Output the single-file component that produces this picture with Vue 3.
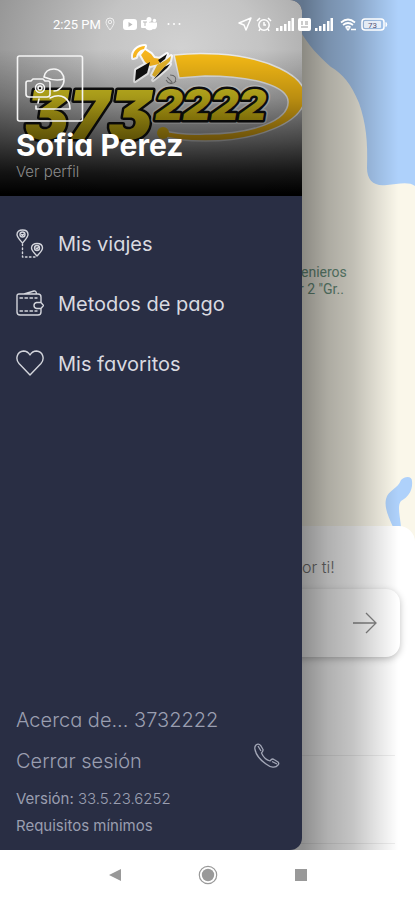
<script setup>
const trips = [
  { id: 'trips', label: 'Mis viajes' },
  { id: 'wallet', label: 'Metodos de pago' },
  { id: 'heart', label: 'Mis favoritos' },
]
</script>

<template>
  <div class="phone">
    <main class="stage">
      <div class="backdrop">
        <svg class="map" viewBox="0 0 415 850" preserveAspectRatio="xMaxYMin slice" aria-hidden="true">
          <rect width="415" height="850" fill="#faf7ea" />
          <path fill="#aed1fb" d="M280 0H415V186C409 181 397 184 387 185C374 187 367 180 367 168C368 142 366 123 359 103C351 84 343 74 331 67C318 56 308 44 302 34L280 0Z" />
          <path fill="#aed1fb" d="M401 480C405 476 412 476 412 481C413 491 408 497 401 501C397 506 400 516 401 527H393C389 518 384 508 386 499C388 490 398 489 401 480Z" />
          <g class="place">
            <text x="301" y="277">enieros</text>
            <text x="299" y="294">r 2 "Gr..</text>
          </g>
        </svg>
        <section class="sheet">
          <p class="slogan">or ti!</p>
          <button class="go" type="button" aria-label="Continuar">
            <svg width="26" height="24" viewBox="0 0 26 24"><path d="M1 12H24M14 2L24 12L14 22" fill="none" stroke="#888" stroke-width="1.3" /></svg>
          </button>
          <div class="line"></div>
          <div class="line second"></div>
        </section>
        <div class="shade"></div>
      </div>

      <aside class="drawer">
        <header class="profile">
          <svg class="brand" viewBox="0 0 302 196" preserveAspectRatio="xMinYMin slice" aria-hidden="true">
            <defs>
              <linearGradient id="gold" x1="0" y1="0" x2="0" y2="1">
                <stop offset="0.25" stop-color="#dccb22" />
                <stop offset="0.8" stop-color="#d9bd10" />
              </linearGradient>
              <g id="craft">
                <path fill="#fbb920" d="M133 58C132 51 138 46 145 46L144 49C139 50 137 53 136 57ZM141 55L145 50L151 54L154 58L161 59L159 64L150 66L145 62Z" />
                <path fill="#111" d="M136 70L150 62L147 73L135 81ZM158 60L167 54L165 59L160 63ZM153 80L164 67L170 64L167 68L158 76Z" />
                <path fill="#edba2b" d="M152 75L157 65L166 60L171 56L170 61L155 77Z" />
              </g>
            </defs>
            <path d="M174 55C190 53 203 53 218 54C266 57 305 75 305 96C305 123 256 141 205 141C186 141 171 139 162 136V130C176 134 189 135 205 134C252 134 288 121 288 102C288 86 253 76 205 76L179 78Z" fill="#f9bd16" stroke="#eee" stroke-width="1.500" />
            <circle cx="163" cy="133" r="6" fill="#e9bd16" />
            <g class="digits">
              <text x="24" y="139" class="big">373</text>
              <text x="155" y="120" class="small halo">2222</text>
              <text x="155" y="120" class="small">2222</text>
            </g>
            <use href="#craft" stroke="#fff" stroke-width="4" stroke-linejoin="round" />
            <use href="#craft" />
            <path d="M167 77L172 82M170 75C175 75 177 78 175 82M168 83H173M166 80C168 84 173 85 176 81" fill="none" stroke="#777" stroke-width="1" />
          </svg>
          <div class="dim"></div>
          <div class="identity">
            <button class="avatar" type="button" aria-label="Cambiar foto">
              <svg width="68" height="68" viewBox="0 0 68 68" fill="none" stroke="#f4f4f4" stroke-width="1.6" stroke-linejoin="round" stroke-linecap="round">
                <rect x="1.500" y="1" width="65" height="65" rx="2" />
                <path d="M28 22C29 16 33 14 38 14C44 14 48 19 48 25C48 31 43 36 38 36M28 22C35 25 42 26 48 24M34 43C46 37 54 44 54 54H20V51M23 44L22 48" />
                <path d="M12 26H15L17 24H27L29 26H32Q34 26 34 28V39Q34 42 31 42H13Q10 42 10 39V28Q10 26 12 26Z" />
                <circle cx="24" cy="33" r="4.500" /><circle cx="24" cy="33" r="2" />
              </svg>
            </button>
            <h1>Sofia Perez</h1>
            <a class="view" href="#perfil">Ver perfil</a>
          </div>
        </header>

        <nav class="menu">
          <a v-for="item in trips" :key="item.id" :href="'#' + item.id">
            <svg width="28" height="30" viewBox="0 0 28 30" fill="none" stroke="#d3d5dc" stroke-width="1.4" stroke-linecap="round" stroke-linejoin="round">
              <template v-if="item.id === 'trips'">
                <path d="M6.500 14C3 10 1 8 1 5.500C1 2.500 3.500 1 6.500 1S12 2.500 12 5.500C12 8 10 10 6.500 14Z" />
                <circle cx="6.500" cy="5.500" r="2.500" /><path d="M5.500 5.500L6.500 6.500L8 5" />
                <path d="M21 27C17 23 15.500 21.500 15.500 19C15.500 16 18 14.500 21 14.500S26.500 16 26.500 19C26.500 21.500 25 23 21 27Z" />
                <circle cx="21" cy="19" r="2.500" /><path d="M20 19L21 20L22.500 18" />
                <path d="M6.500 15V28H20" stroke-dasharray="1.500 2.500" />
              </template>
              <template v-else-if="item.id === 'wallet'">
                <path d="M8 5L18 2Q20 1.500 20.500 4.500M25 13V8Q25 5 22 5H3Q1 5 1 7V23Q1 26 4 26H22Q25 26 25 23V20M20.500 13.500H25L27.500 16.500L25 19.500H20.500Q18 19 18 16.500Q18 14 20.500 13.500Z" />
                <path d="M4 9H21M4 22H21" stroke-dasharray="2.500 2.500" />
              </template>
              <path v-else d="M14 26L3 14.500C-1 10 1 2.500 7.500 2C10.500 2 12.500 3.500 14 6C15.500 3.500 17.500 2 20.500 2C27 2.500 29 10 25 14.500Z" />
            </svg>
            <span>{{ item.label }}</span>
          </a>
        </nav>

        <footer class="foot">
          <a class="wide" href="#acerca">Acerca de... 3732222</a>
          <div class="session">
            <button class="wide" type="button">Cerrar sesión</button>
            <button class="call" type="button" aria-label="Llamar">
              <svg width="26" height="26" viewBox="0 0 26 26" fill="none" stroke="#a3a7b7" stroke-width="1.3" stroke-linejoin="round">
                <path d="M2 2C4 .5 5.500 1 7 3L9 6.500C9.500 8 8.500 9 7.500 10C9 13.500 12.500 17 16 18C17 16.500 18.500 15.500 20 16.500L24 19C25 20 25 21 24 22C21.500 25.500 16.500 24.500 12 21C7 17.500 2 11.500 1 6.500C.5 4.500 1 3 2 2Z" />
                <path d="M4 3L7 8M18 18.500L23 21" />
              </svg>
            </button>
          </div>
          <p><b>Versión:</b> 33.5.23.6252</p>
          <a class="req" href="#requisitos">Requisitos mínimos</a>
        </footer>
      </aside>

      <div class="status">
        <div class="left">
          <span>2:25 PM</span>
          <svg width="10" height="14" viewBox="0 0 10 14" fill="none" stroke="#eee" stroke-width="1"><path d="M5 13C2 9 1 7 1 5Q1 1 5 1T9 5C9 7 8 9 5 13Z" /><circle cx="5" cy="5" r="1.700" /></svg>
          <svg class="tube" width="14" height="11" viewBox="0 0 14 11"><rect width="14" height="11" rx="3" fill="#fff" /><path d="M5.500 3L9.500 5.500L5.500 8Z" fill="#bbb" /></svg>
          <svg width="16" height="14" viewBox="0 0 16 14" fill="#fff"><circle cx="8" cy="2.500" r="2.500" /><circle cx="13.500" cy="3.500" r="1.700" /><path d="M4 5.500H16V9Q15 13 12 12Q10 14 7 13Q4 12 4 9Z" /><rect y="3" width="8" height="8" rx="1" /><path d="M2 5H6M4 5V9" stroke="#bbb" stroke-width="1" /></svg>
          <svg class="dots" width="14" height="4" viewBox="0 0 14 4" fill="#fff"><circle cx="1.500" cy="2" r="1" /><circle cx="7" cy="2" r="1" /><circle cx="12.500" cy="2" r="1" /></svg>
        </div>
        <div class="right">
          <svg width="14" height="14" viewBox="0 0 14 14" fill="none" stroke="#fff" stroke-width="1.500" stroke-linejoin="round"><path d="M1 6L13 1L8 13L6 8Z" /></svg>
          <svg width="16" height="15" viewBox="0 0 16 15" fill="none" stroke="#fff" stroke-width="1.500"><circle cx="8" cy="8" r="5.200" /><path d="M1 4L4 1M12 1L15 4M8 5V8H10M4 12L3 14M12 12L13 14" /></svg>
          <svg width="18" height="13" viewBox="0 0 18 13" fill="#fff"><path d="M0 10H2.500V13H0ZM4 8H6.500V13H4ZM8 6H10.500V13H8ZM12 3H14.500V13H12ZM15.500 0H18V13H15.500Z" /></svg>
          <svg width="13" height="13" viewBox="0 0 13 13"><rect width="13" height="13" rx="2" fill="#fff" /><path d="M3 4H5M7 4H10M3 6H5M7 6H10M3 9H10" stroke="#999" stroke-width="1" /></svg>
          <svg width="18" height="13" viewBox="0 0 18 13" fill="#fff"><path d="M0 10H2.500V13H0ZM4 8H6.500V13H4ZM8 6H10.500V13H8ZM12 3H14.500V13H12ZM15.500 0H18V13H15.500Z" /></svg>
          <svg class="wifi" width="17" height="13" viewBox="0 0 17 13" fill="none" stroke="#fff" stroke-width="1.700"><path d="M1 4.500Q8 -1.500 15 4.500M3 7Q8 3 13 7M5.500 9.500Q8 7.500 10.500 9.500" /><path d="M8 12L7 11H9ZM11 11.500H16" stroke-width="1.300" /></svg>
          <svg width="27" height="13" viewBox="0 0 27 13"><rect x="1" y="1" width="22" height="11" rx="3" fill="none" stroke="#fff" stroke-width="1.500" /><rect x="3" y="3" width="17" height="7" rx="1" fill="#fff" fill-opacity=".75" /><path d="M25 4.500Q26.500 6.500 25 8.500Z" fill="#fff" stroke="#fff" /><text x="7" y="9.500" class="level">73</text></svg>
        </div>
      </div>
    </main>

    <nav class="keys">
      <button type="button" aria-label="Atrás"><svg width="14" height="14" viewBox="0 0 14 14"><path d="M1 7L13 1V13Z" fill="#999" /></svg></button>
      <button type="button" aria-label="Inicio"><svg width="20" height="20" viewBox="0 0 20 20"><circle cx="10" cy="10" r="8.700" fill="none" stroke="#999" stroke-width="1.200" /><circle cx="10" cy="10" r="6.200" fill="#999" /></svg></button>
      <button type="button" aria-label="Recientes"><svg width="14" height="14" viewBox="0 0 14 14"><rect x="1" y="1" width="12" height="12" fill="#999" /></svg></button>
    </nav>
  </div>
</template>

<style>
body {
  margin: 0;
  background: #fff;
}
</style>

<style scoped>
.phone {
  --drawer: 72.8%;
  display: flex;
  flex-direction: column;
  min-height: 100vh;
  font-family: Inter, "Liberation Sans", sans-serif;
  font-feature-settings: "cv11";
}
button {
  padding: 0;
  border: 0;
  background: none;
  font: inherit;
  font-feature-settings: inherit;
  color: inherit;
}
a {
  color: inherit;
  text-decoration: none;
}
p, h1 {
  margin: 0;
}
svg {
  display: block;
  flex: none;
}
.stage {
  position: relative;
  display: flex;
  flex: 1;
}
.backdrop {
  position: absolute;
  inset: 0;
  display: flex;
  flex-direction: column;
  justify-content: flex-end;
  overflow: hidden;
}
.map {
  position: absolute;
  inset: 0;
  width: 100%;
  height: 100%;
}
.place {
  fill: #6b9480;
  font-family: Roboto, sans-serif;
  font-size: 14px;
}
.sheet {
  position: relative;
  display: flex;
  flex-direction: column;
  box-sizing: border-box;
  padding-bottom: 6px;
  border-radius: 0 16px 0 0;
  background: #fff;
}
.slogan {
  padding: 30px 0 11px var(--drawer);
  color: #777;
  font-size: 16px;
  font-weight: 300;
  line-height: 22px;
}
.go {
  display: flex;
  align-items: center;
  justify-content: flex-end;
  height: 68px;
  margin: 0 15px 0 16px;
  padding-right: 22px;
  border-radius: 14px;
  background: #fff;
  box-shadow: 0 2px 7px rgba(0, 0, 0, 0.25);
}
.line {
  height: 1px;
  margin: 98px 20px 0;
  background: #eee;
}
.line.second {
  margin-top: 87px;
}
.shade {
  position: absolute;
  inset: 0;
  background: linear-gradient(90deg, rgba(0, 0, 0, 0.44) 73%, rgba(0, 0, 0, 0.31) 79%, rgba(0, 0, 0, 0.23) 85%, rgba(0, 0, 0, 0.1) 91%, transparent 96%);
}
.drawer {
  position: relative;
  display: flex;
  flex-direction: column;
  width: var(--drawer);
  overflow: hidden;
  border-radius: 0 12px 12px 0;
  background: #292e44;
  color: #d9dae0;
}
.profile {
  position: relative;
  height: 196px;
  overflow: hidden;
  background: radial-gradient(ellipse 230px 190px at 60% 25%, #d2d2d2, #c4c4c4 35%, #868686 100%);
}
.brand {
  position: absolute;
  inset: 0;
  width: 100%;
  height: 100%;
}
.digits {
  fill: url(#gold);
  stroke: #111;
  stroke-linejoin: round;
  paint-order: stroke;
  font-family: Inter, sans-serif;
  font-feature-settings: "cv09";
  font-style: italic;
  font-weight: 900;
}
.big {
  font-size: 67px;
  stroke-width: 5px;
}
.small {
  font-size: 43px;
  stroke-width: 5px;
}
.halo {
  stroke: #ddd;
  stroke-width: 8px;
}
.dim {
  position: absolute;
  inset: 0;
  background: linear-gradient(rgba(0, 0, 0, 0) 25%, rgba(0, 0, 0, 0.25) 50%, rgba(0, 0, 0, 0.58) 72%, rgba(0, 0, 0, 0.86) 88%, #000 99%);
}
.identity {
  position: relative;
  display: flex;
  flex-direction: column;
  align-items: flex-start;
  padding: 55px 16px 0;
}
h1 {
  margin-top: 4px;
  color: #fff;
  font-size: 30px;
  font-weight: 700;
  line-height: 36px;
}
.view {
  color: #8b8b8b;
  font-size: 15px;
  font-weight: 300;
  line-height: 18px;
}
.menu {
  display: flex;
  flex-direction: column;
  padding: 18px 16px;
}
.menu a {
  display: flex;
  align-items: center;
  gap: 14px;
  height: 60px;
  font-size: 20px;
}
.foot {
  display: flex;
  flex-direction: column;
  gap: 5px;
  margin-top: auto;
  padding: 0 22px 13px 16px;
  color: #9a9eb0;
  font-size: 15px;
  font-weight: 300;
  line-height: 22px;
}
.wide {
  font-size: 20px;
  line-height: 36px;
}
.session {
  display: flex;
  justify-content: space-between;
  padding-bottom: 4px;
}
.call {
  align-self: flex-start;
}
.foot b, .req {
  font-weight: 400;
}
.status {
  position: absolute;
  inset: 0 0 auto;
  display: flex;
  align-items: center;
  justify-content: space-between;
  height: 48px;
  padding: 0 27px 0 53px;
  color: #fff;
  font-family: Roboto, sans-serif;
  font-size: 13px;
}
.left, .right {
  display: flex;
  align-items: center;
}
.left {
  gap: 4px;
}
.tube {
  margin-left: 4px;
}
.dots {
  margin-left: 6px;
}
.right {
  gap: 4px;
}
.wifi {
  margin-left: 3px;
}
.level {
  fill: #557;
  font-size: 8px;
}
.keys {
  display: flex;
  justify-content: center;
  height: 50px;
  background: #fff;
}
.keys button {
  display: grid;
  place-items: center;
  width: 93px;
}
</style>
